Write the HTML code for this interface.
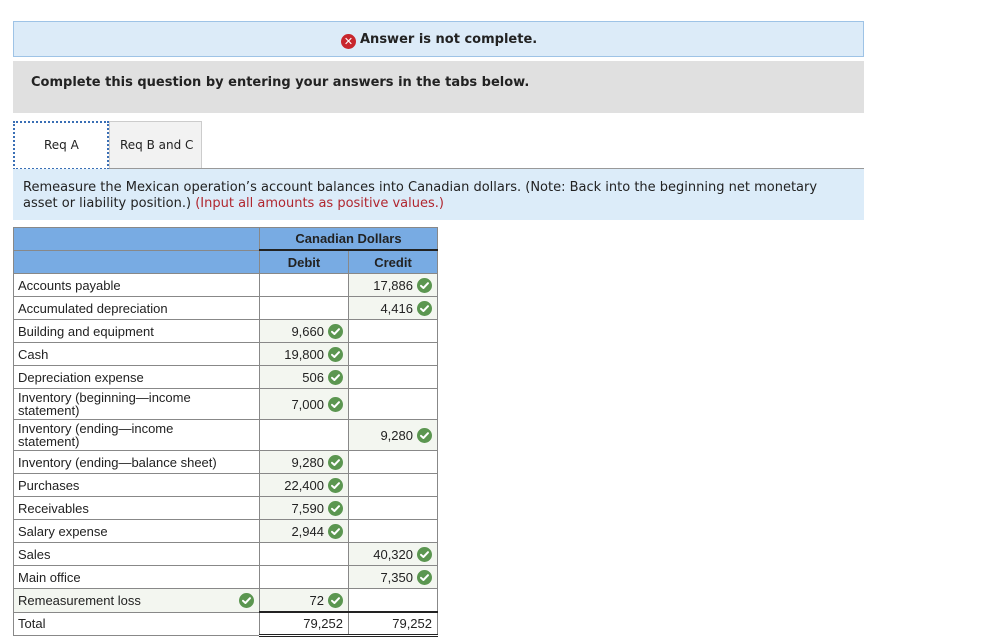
<!DOCTYPE html>
<html><head><style>
body{margin:0;background:#fff;width:993px;height:641px;position:relative;overflow:hidden;font-family:"DejaVu Sans",Verdana,sans-serif;}
.abs{position:absolute}
.ck{display:inline-block;width:15px;height:15px;border-radius:50%;background:#5b9650;vertical-align:-3px;position:relative}
.ck svg{position:absolute;left:0;top:0}
table{border-collapse:collapse;font-family:"Liberation Sans",Arial,sans-serif;font-size:13px;color:#222}
td{border:1px solid #888;padding:0 4px;height:22px;line-height:13px}
.h{background:#78abe3;text-align:center;font-weight:bold;color:#222}
.n{text-align:right;padding-right:5px}
.g{background:#f3f6f0}
.n .ck{margin-left:4px}
</style></head><body>
<div class="abs" style="left:13px;top:21px;width:849px;height:34px;background:#dcebf8;border:1px solid #9ec3e6"></div>
<div class="abs" style="left:341px;top:32px;font-size:13px;font-weight:bold;color:#222;"><span style="display:inline-block;width:15px;height:15px;border-radius:50%;background:#c8262d;color:#fff;font-size:11px;line-height:15px;text-align:center;vertical-align:-2px;margin-right:4px">✕</span>Answer is not complete.</div>
<div class="abs" style="left:13px;top:61px;width:851px;height:52px;background:#e0e0e0"></div>
<div class="abs" style="left:31px;top:75px;font-size:13px;font-weight:bold;color:#222">Complete this question by entering your answers in the tabs below.</div>
<div class="abs" style="left:13px;top:168px;width:851px;height:1px;background:#999"></div>
<div class="abs" style="left:109px;top:121px;width:93px;height:47px;background:#f2f2f2;border:1px solid #ccc;border-bottom:none;box-sizing:border-box"></div>
<div class="abs" style="left:13px;top:121px;width:96px;height:49px;background:#fff;border:2px dotted #3a6fb5;box-sizing:border-box"></div>
<div class="abs" style="left:44px;top:138px;font-size:12px;color:#222">Req A</div>
<div class="abs" style="left:120px;top:138px;font-size:12px;color:#222">Req B and C</div>
<div class="abs" style="left:13px;top:169px;width:851px;height:51px;background:#dcecf9"></div>
<div class="abs" style="left:23px;top:180px;font-size:13px;line-height:16px;color:#222;width:830px">Remeasure the Mexican operation’s account balances into Canadian dollars. (Note: Back into the beginning net monetary asset or liability position.) <span style="color:#b0262f">(Input all amounts as positive values.)</span></div>

<table class="abs" style="left:13px;top:227px;width:425px">
<colgroup><col style="width:246px"><col style="width:89px"><col style="width:89px"></colgroup>
<tr><td class="h" style="height:21px"></td><td class="h" colspan="2" style="border-bottom:2px solid #222;height:21px">Canadian Dollars</td></tr>
<tr><td class="h">&nbsp;</td><td class="h">Debit</td><td class="h">Credit</td></tr>
<tr><td>Accounts payable</td><td></td><td class="n g">17,886<span class="ck">C</span></td></tr>
<tr><td>Accumulated depreciation</td><td></td><td class="n g">4,416<span class="ck">C</span></td></tr>
<tr><td>Building and equipment</td><td class="n g">9,660<span class="ck">C</span></td><td></td></tr>
<tr><td>Cash</td><td class="n g">19,800<span class="ck">C</span></td><td></td></tr>
<tr><td>Depreciation expense</td><td class="n g">506<span class="ck">C</span></td><td></td></tr>
<tr><td style="height:30px">Inventory (beginning—income<br>statement)</td><td class="n g">7,000<span class="ck">C</span></td><td></td></tr>
<tr><td style="height:30px">Inventory (ending—income<br>statement)</td><td></td><td class="n g">9,280<span class="ck">C</span></td></tr>
<tr><td>Inventory (ending—balance sheet)</td><td class="n g">9,280<span class="ck">C</span></td><td></td></tr>
<tr><td>Purchases</td><td class="n g">22,400<span class="ck">C</span></td><td></td></tr>
<tr><td>Receivables</td><td class="n g">7,590<span class="ck">C</span></td><td></td></tr>
<tr><td>Salary expense</td><td class="n g">2,944<span class="ck">C</span></td><td></td></tr>
<tr><td>Sales</td><td></td><td class="n g">40,320<span class="ck">C</span></td></tr>
<tr><td>Main office</td><td></td><td class="n g">7,350<span class="ck">C</span></td></tr>
<tr><td class="g" style="position:relative">Remeasurement loss<span class="ck" style="position:absolute;right:5px;top:4px">C</span></td><td class="n g">72<span class="ck">C</span></td><td></td></tr>
<tr><td style="height:21px">Total</td><td class="n" style="border-top:2px solid #222;border-bottom:3px double #222;height:21px">79,252</td><td class="n" style="border-top:2px solid #222;border-bottom:3px double #222;height:21px">79,252</td></tr>
</table>
<script>
document.querySelectorAll('.ck').forEach(function(e){e.textContent='';e.innerHTML='<svg width="15" height="15" viewBox="0 0 15 15"><path d="M4 7.8 L6.4 10 L11 5.2" fill="none" stroke="#fff" stroke-width="2" stroke-linecap="round" stroke-linejoin="round"/></svg>';});
</script>
</body></html>
